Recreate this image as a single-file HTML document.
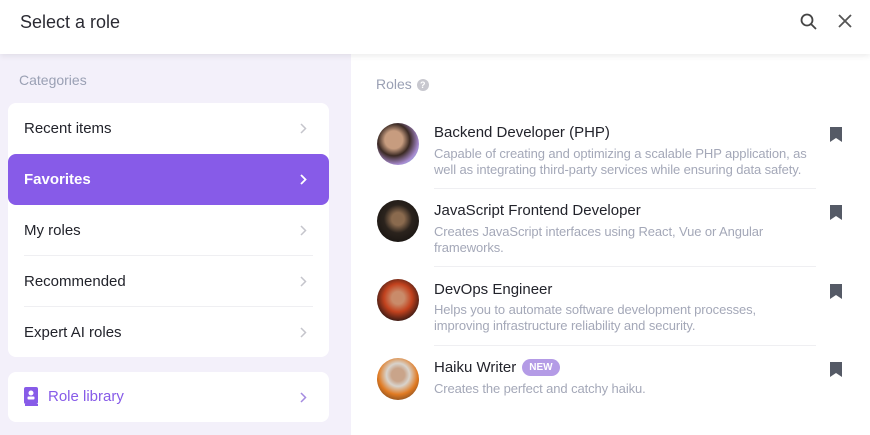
<!DOCTYPE html>
<html><head><meta charset="utf-8"><style>
*{box-sizing:border-box;margin:0;padding:0}
body{width:870px;height:435px;overflow:hidden;font-family:"Liberation Sans",sans-serif;background:#fff;position:relative}
.hdr{position:absolute;left:0;top:0;width:870px;height:54px;background:#fff;box-shadow:0 2px 6px rgba(0,0,0,.08);z-index:2}
.hdr h1{position:absolute;left:20px;top:12px;font-size:18px;font-weight:normal;color:#2b2b33}
.left{position:absolute;left:0;top:54px;width:351px;height:381px;background:#f3f0fa}
.cat{position:absolute;left:19px;top:18px;font-size:14px;color:#9aa0b4}
.card{position:absolute;left:8px;width:321px;background:#fff;border-radius:8px}
.row{position:absolute;left:0;width:321px;height:51px;font-size:15px;color:#22232b;padding:17px 0 0 16px}
.row svg,.card>svg.c{position:absolute;right:22px;top:20px}
.row.sel{background:#875be8;color:#fff;font-weight:bold;border-radius:8px}
.sep{position:absolute;left:16px;right:16px;height:1px;background:#efeff2}
.roles{position:absolute;left:376px;top:76px;font-size:14px;color:#9aa0b4}
.q{display:inline-block;width:12px;height:12px;border-radius:50%;background:#c8c8cf;color:#fff;font-size:9px;text-align:center;line-height:12px;font-weight:bold;margin-left:5px;vertical-align:1px}
.av{position:absolute;left:377px;width:42px;height:42px;border-radius:50%}
.t{position:absolute;left:434px;font-size:15px;color:#22232b}
.d{position:absolute;left:434px;font-size:13px;color:#a4a8b8;line-height:16px;white-space:nowrap;letter-spacing:-0.1px}
.bm{position:absolute;left:830px}
.isep{position:absolute;left:434px;width:382px;height:1px;background:#efeff2}
.new{display:inline-block;background:#b49be6;color:#fff;font-size:10px;font-weight:bold;border-radius:9px;padding:3px 7px;margin-left:6px;vertical-align:2px}
</style></head><body>
<div class="hdr"><h1>Select a role</h1>
<svg style="position:absolute;left:800px;top:13px" width="18" height="18" viewBox="0 0 18 18"><circle cx="7" cy="7" r="5.5" fill="none" stroke="#444" stroke-width="1.8"/><path d="M11 11l5 5" stroke="#444" stroke-width="1.8"/></svg>
<svg style="position:absolute;left:837px;top:13px" width="16" height="16" viewBox="0 0 16 16"><path d="M2 2l12 12M14 2L2 14" stroke="#555" stroke-width="1.8"/></svg>
</div>
<div class="left">
<div class="cat">Categories</div>
<div class="card" style="top:49px;height:254px">
<div class="row" style="top:0">Recent items<svg width="7" height="11" viewBox="0 0 7 11"><path d="M1 1l4.5 4.5L1 10" fill="none" stroke="#c5c5cc" stroke-width="1.5"/></svg></div>
<div class="row sel" style="top:51px">Favorites<svg width="7" height="11" viewBox="0 0 7 11"><path d="M1 1l4.5 4.5L1 10" fill="none" stroke="#fff" stroke-width="1.8"/></svg></div>
<div class="row" style="top:102px">My roles<svg width="7" height="11" viewBox="0 0 7 11"><path d="M1 1l4.5 4.5L1 10" fill="none" stroke="#c5c5cc" stroke-width="1.5"/></svg></div>
<div class="sep" style="top:152px"></div>
<div class="row" style="top:153px">Recommended<svg width="7" height="11" viewBox="0 0 7 11"><path d="M1 1l4.5 4.5L1 10" fill="none" stroke="#c5c5cc" stroke-width="1.5"/></svg></div>
<div class="sep" style="top:203px"></div>
<div class="row" style="top:204px">Expert AI roles<svg width="7" height="11" viewBox="0 0 7 11"><path d="M1 1l4.5 4.5L1 10" fill="none" stroke="#c5c5cc" stroke-width="1.5"/></svg></div>
</div>
<div class="card" style="top:318px;height:50px">
<svg style="position:absolute;left:16px;top:15px" width="14" height="19" viewBox="0 0 14 19"><rect x="0" y="0" width="14" height="17" rx="2" fill="#875be8"/><circle cx="7" cy="6" r="2.5" fill="#fff"/><rect x="3.5" y="9.5" width="7" height="3" rx="1" fill="#fff"/><rect x="1" y="17" width="13" height="2" fill="#875be8"/></svg>
<div style="position:absolute;left:40px;top:16px;font-size:15px;color:#875be8">Role library</div>
<svg class="c" width="7" height="11" viewBox="0 0 7 11"><path d="M1 1l4.5 4.5L1 10" fill="none" stroke="#a58be0" stroke-width="1.5"/></svg>
</div>
</div>
<div class="roles">Roles<span class="q">?</span></div>

<div class="av" style="top:123px;background:radial-gradient(circle at 40% 40%,#c79c7f 0 25%,#3b2a24 45%,#a88bd0 70%,#6ee3ee)"></div>
<div class="t" style="top:124px">Backend Developer (PHP)</div>
<div class="d" style="top:146px">Capable of creating and optimizing a scalable PHP application, as<br>well as integrating third-party services while ensuring data safety.</div>
<svg class="bm" style="top:127px" width="12" height="15" viewBox="0 0 12 15"><path d="M0 0h12v15l-6-4-6 4z" fill="#555a66"/></svg>
<div class="isep" style="top:188px"></div>

<div class="av" style="top:200px;background:radial-gradient(circle at 50% 45%,#8a6a4e 0 20%,#2b231d 45%,#0f0d0c)"></div>
<div class="t" style="top:202px">JavaScript Frontend Developer</div>
<div class="d" style="top:224px">Creates JavaScript interfaces using React, Vue or Angular<br>frameworks.</div>
<svg class="bm" style="top:205px" width="12" height="15" viewBox="0 0 12 15"><path d="M0 0h12v15l-6-4-6 4z" fill="#555a66"/></svg>
<div class="isep" style="top:266px"></div>

<div class="av" style="top:279px;background:radial-gradient(circle at 50% 45%,#c98b6a 0 20%,#c2421e 45%,#3a1a14 75%)"></div>
<div class="t" style="top:281px">DevOps Engineer</div>
<div class="d" style="top:302px">Helps you to automate software development processes,<br>improving infrastructure reliability and security.</div>
<svg class="bm" style="top:284px" width="12" height="15" viewBox="0 0 12 15"><path d="M0 0h12v15l-6-4-6 4z" fill="#555a66"/></svg>
<div class="isep" style="top:345px"></div>

<div class="av" style="top:358px;background:radial-gradient(circle at 50% 40%,#c9a48a 0 20%,#d8d3cc 35%,#e07a22 60%,#3a2a20)"></div>
<div class="t" style="top:359px">Haiku Writer<span class="new">NEW</span></div>
<div class="d" style="top:381px">Creates the perfect and catchy haiku.</div>
<svg class="bm" style="top:362px" width="12" height="15" viewBox="0 0 12 15"><path d="M0 0h12v15l-6-4-6 4z" fill="#555a66"/></svg>
</body></html>
